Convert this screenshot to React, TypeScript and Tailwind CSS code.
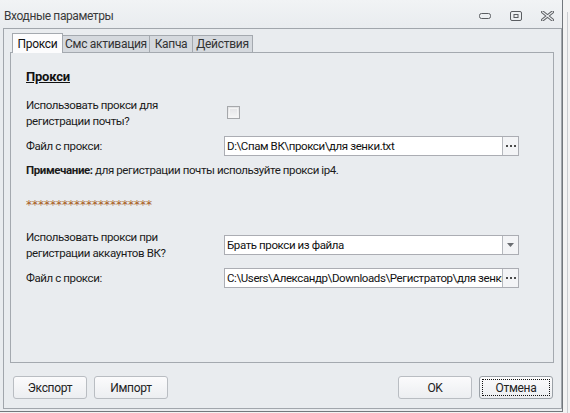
import React from "react";

function Dots() {
  return (
    <div className="w-[16px] h-full border-l border-[#b5b8bd] bg-[#f3f4f6] flex items-center justify-center gap-[2px]">
      <span className="w-[2px] h-[2px] bg-[#4a4a4a]" />
      <span className="w-[2px] h-[2px] bg-[#4a4a4a]" />
      <span className="w-[2px] h-[2px] bg-[#4a4a4a]" />
    </div>
  );
}

function FileInput({ value }: { value: string }) {
  return (
    <div className="w-[295px] h-[20px] border border-[#abadb3] bg-white flex">
      <div className="flex-1 min-w-0 pl-[2px] leading-[18px] overflow-hidden whitespace-nowrap text-[#111]">{value}</div>
      <Dots />
    </div>
  );
}

function Btn({ label, focused }: { label: string; focused?: boolean }) {
  return (
    <div
      className={
        "w-[74px] h-[23px] rounded-[3px] border bg-gradient-to-b from-[#fbfbfc] to-[#eceef1] flex items-stretch text-[#222] " +
        (focused ? "border-[#9aa0a6]" : "border-[#b9bdc2]")
      }
    >
      {focused ? (
        <div className="flex-1 m-[2px] border border-dotted border-[#111] flex items-center justify-center">{label}</div>
      ) : (
        <div className="flex-1 flex items-center justify-center">{label}</div>
      )}
    </div>
  );
}

export default function App() {
  return (
    <div className="w-[570px] h-[413px] bg-[#f3f3f3] relative overflow-hidden font-['Roboto','Liberation_Sans',Arial,sans-serif] text-[11.5px] tracking-[-0.4px] text-[#1b1b1b]">
      <div className="absolute left-[567px] top-[12px] w-[1px] h-[401px] bg-[#c9ccd0]" />
      <div className="w-[563px] h-[412px] bg-[#e9ecef] border-r border-b border-[#72777c] flex flex-col">
        {/* title bar */}
        <div className="h-[28px] flex items-center justify-between pl-[4px] pr-[8px] bg-gradient-to-b from-[#f1f3f5] to-[#e9ecef]">
          <span className="text-[#3a3a3a] mt-[4px] text-[12px]">Входные параметры</span>
          <div className="flex items-center gap-[19px] mt-[4px]">
            <svg width="12" height="12" viewBox="0 0 12 12">
              <rect x="0.5" y="3.5" width="11" height="5" rx="2" fill="none" stroke="#5a5d61" />
            </svg>
            <svg width="12" height="10" viewBox="0 0 12 10">
              <rect x="0.5" y="0.5" width="11" height="9" rx="1.5" fill="none" stroke="#5a5d61" />
              <rect x="4" y="3.5" width="4" height="3" fill="none" stroke="#5a5d61" />
            </svg>
            <svg width="13" height="10" viewBox="0 0 13 10">
              <path d="M1.5 1 L11.5 9 M11.5 1 L1.5 9" stroke="#5f6266" strokeWidth="3.2" strokeLinecap="square" />
              <path d="M1.5 1 L11.5 9 M11.5 1 L1.5 9" stroke="#eef0f2" strokeWidth="1.2" strokeLinecap="square" />
            </svg>
          </div>
        </div>

        {/* outer panel */}
        <div className="flex-1 ml-[3px] mb-[2px] border border-[#a1a6ac] flex flex-col pt-[4px] pl-[6px] pr-[7px]">
          {/* tabs */}
          <div className="h-[19px] flex items-end pl-[2px] relative z-10 text-[12px] tracking-[-0.3px]">
            <div className="w-[51px] h-[20px] -mb-[1px] bg-[#fcfcfd] border border-b-0 border-[#a4a9af] flex items-center justify-center text-[#111]">
              Прокси
            </div>
            <div className="w-[87px] h-[17px] bg-[#d5d9de] border-t border-r border-[#a4a9af] flex items-center justify-center text-[#333]">
              Смс активация
            </div>
            <div className="w-[43px] h-[17px] bg-[#d5d9de] border-t border-r border-[#a4a9af] flex items-center justify-center text-[#333]">
              Капча
            </div>
            <div className="w-[60px] h-[17px] bg-[#d5d9de] border-t border-r border-[#a4a9af] flex items-center justify-center text-[#333]">
              Действия
            </div>
          </div>

          {/* tab panel */}
          <div className="h-[311px] border border-[#a4a9af] bg-[#e9ecef] pl-[15px] pt-[16px] flex flex-col">
            <div className="text-[13px] font-bold underline leading-[16px] text-[#111] tracking-[-0.2px]">Прокси</div>

            <div className="mt-[12px] flex items-center">
              <div className="w-[198px] leading-[16px]">
                Использовать прокси для
                <br />
                регистрации почты?
              </div>
              <div className="ml-[3px] -mt-[2px] w-[13px] h-[13px] border border-[#a6a8ab] bg-gradient-to-b from-[#e2e3e5] to-[#f5f5f6] p-[1px]">
                <div className="w-full h-full border border-[#f4f4f4]" />
              </div>
            </div>

            <div className="mt-[7px] flex items-center">
              <div className="w-[198px] leading-[16px]">Файл с прокси:</div>
              <FileInput value="D:\Спам ВК\прокси\для зенки.txt" />
            </div>

            <div className="mt-[6px] leading-[16px]">
              <span className="font-bold">Примечание:</span> для регистрации почты используйте прокси ip4.
            </div>

            <div className="mt-[19px] leading-[16px] text-[#a85c24] font-['DejaVu_Sans',sans-serif] text-[12px] tracking-normal">*********************</div>

            <div className="mt-[16px] flex items-center">
              <div className="w-[198px] leading-[16px]">
                Использовать прокси при
                <br />
                регистрации аккаунтов ВК?
              </div>
              <div className="w-[295px] h-[20px] border border-[#abadb3] bg-white flex">
                <div className="flex-1 pl-[2px] leading-[18px] whitespace-nowrap text-[#111]">Брать прокси из файла</div>
                <div className="w-[16px] h-full border-l border-[#b5b8bd] bg-[#f3f4f6] flex items-center justify-center">
                  <svg width="7" height="4" viewBox="0 0 7 4">
                    <path d="M0 0 H7 L3.5 4 Z" fill="#6a6d71" />
                  </svg>
                </div>
              </div>
            </div>

            <div className="mt-[7px] flex items-center">
              <div className="w-[198px] leading-[16px]">Файл с прокси:</div>
              <FileInput value="C:\Users\Александр\Downloads\Регистратор\для зенки.txt" />
            </div>
          </div>

          {/* buttons */}
          <div className="mt-[13px] flex items-center pl-[3px] pr-[1px] text-[12px] tracking-[-0.3px]">
            <Btn label="Экспорт" />
            <div className="ml-[7px]">
              <Btn label="Импорт" />
            </div>
            <div className="ml-auto">
              <Btn label="OK" />
            </div>
            <div className="ml-[7px]">
              <Btn label="Отмена" focused />
            </div>
          </div>
        </div>
      </div>
    </div>
  );
}
